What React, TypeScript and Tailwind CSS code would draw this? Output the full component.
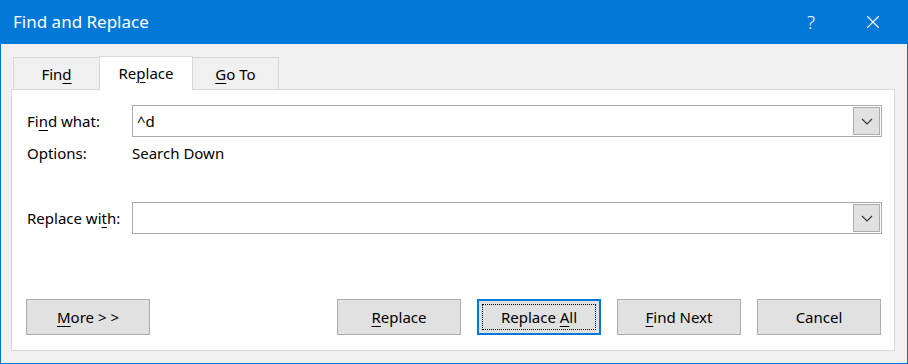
import { X } from 'lucide-react'

const font = { fontFamily: '"Noto Sans", "Liberation Sans", sans-serif' }

function U({ children }: { children: string }) {
  return <span className="underline underline-offset-[3px] decoration-1">{children}</span>
}

function Chevron() {
  return (
    <svg width="12" height="7" viewBox="0 0 12 7" className="text-[#333]">
      <path d="M1 1l5 5 5-5" fill="none" stroke="currentColor" strokeWidth="1.1" />
    </svg>
  )
}

function Combo({ value }: { value?: string }) {
  return (
    <div className="flex h-[32px] w-[750px] items-center border border-[#ababab] bg-white">
      <div className="flex-1 pl-[4px] text-[15px] text-black">{value}</div>
      <div className="mr-px flex h-[28px] w-[27px] items-center justify-center border border-[#adadad] bg-[#e1e1e1]">
        <Chevron />
      </div>
    </div>
  )
}

function DialogButton({ children, focused }: { children: React.ReactNode; focused?: boolean }) {
  if (focused) {
    return (
      <div className="flex h-[36px] w-[124px] items-center justify-center border-2 border-[#0078d7] bg-[#e1e1e1] p-[3px]">
        <div className="flex h-full w-full items-center justify-center border border-dotted border-black text-[15px] text-black">
          <span>{children}</span>
        </div>
      </div>
    )
  }
  return (
    <div className="flex h-[36px] w-[124px] items-center justify-center border border-[#adadad] bg-[#e1e1e1] text-[15px] text-black">
      <span>{children}</span>
    </div>
  )
}

export default function App() {
  return (
    <div style={font} className="flex h-[364px] w-[908px] flex-col border-x border-b border-[#0078d7] bg-[#f0f0f0]">
      <div className="-mx-px flex h-[44px] shrink-0 items-center bg-[#0078d7] text-white">
        <div className="flex-1 pl-[13px] text-[17px]">Find and Replace</div>
        <div className="flex w-[46px] items-center justify-center text-[19px] font-light">?</div>
        <div className="ml-[24px] mr-[20px] flex w-[30px] items-center justify-center">
          <X className="h-[22px] w-[22px]" strokeWidth={1.2} />
        </div>
      </div>

      <div className="flex flex-1 flex-col pl-[10px] pr-[12px] pb-[12px] pt-[12px]">
        <div className="flex h-[33px] items-end pl-[2px] text-[15px] text-black">
          <div className="flex h-[32px] w-[87px] items-center justify-center border border-b-0 border-[#d9d9d9] bg-[#f0f0f0] pt-px">
            <span>
              Fin<U>d</U>
            </span>
          </div>
          <div className="relative z-10 -mb-px -ml-px flex h-[34px] w-[94px] items-center justify-center border border-b-0 border-[#d9d9d9] bg-white pb-[1px]">
            <span>
              Re<U>p</U>lace
            </span>
          </div>
          <div className="-ml-px flex h-[32px] w-[87px] items-center justify-center border border-b-0 border-[#d9d9d9] bg-[#f0f0f0] pt-px">
            <span>
              <U>G</U>o To
            </span>
          </div>
        </div>

        <div className="flex flex-1 flex-col border border-[#d9d9d9] bg-white pl-[15px] pr-[12px] pt-[15px] pb-[15px] text-[15px] text-black">
          <div className="flex items-center">
            <div className="w-[105px]">
              Fi<U>n</U>d what:
            </div>
            <Combo value="^d" />
          </div>
          <div className="mt-[6px] flex h-[20px] items-center">
            <div className="w-[105px]">Options:</div>
            <div>Search Down</div>
          </div>
          <div className="mt-[39px] flex items-center">
            <div className="w-[105px]">
              Replace wi<U>t</U>h:
            </div>
            <Combo />
          </div>
          <div className="flex-1" />
          <div className="-ml-px flex items-center">
            <DialogButton>
              <U>M</U>ore &gt; &gt;
            </DialogButton>
            <div className="flex-1" />
            <div className="mr-px flex gap-4">
              <DialogButton>
                <U>R</U>eplace
              </DialogButton>
              <DialogButton focused>
                Replace <U>A</U>ll
              </DialogButton>
              <DialogButton>
                <U>F</U>ind Next
              </DialogButton>
              <DialogButton>Cancel</DialogButton>
            </div>
          </div>
        </div>
      </div>
    </div>
  )
}
